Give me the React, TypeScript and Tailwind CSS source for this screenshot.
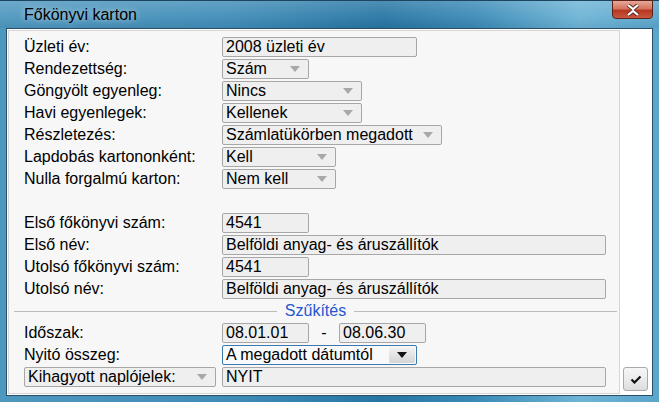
import type { ReactNode } from "react";

function Arrow({ dark = false }: { dark?: boolean }) {
  return (
    <svg width="10" height="6" viewBox="0 0 10 6" className="shrink-0">
      <path d="M0 0 L10 0 L5 6 Z" fill={dark ? "#111" : "#a8a8a8"} />
    </svg>
  );
}

function Field({ w, children }: { w: string; children: ReactNode }) {
  return (
    <div className={`${w} h-[20px] border border-[#a7a7a7] rounded-[2px] bg-[#efefef] pl-[3px] leading-[18px] whitespace-nowrap overflow-hidden`}>
      {children}
    </div>
  );
}

function Select({ w, children }: { w: string; children: ReactNode }) {
  return (
    <div className={`${w} h-[20px] border border-[#a7a7a7] rounded-[2px] bg-[#efefef] pl-[3px] pr-[8px] flex items-center justify-between leading-[18px] whitespace-nowrap`}>
      <span>{children}</span>
      <Arrow />
    </div>
  );
}

function Label({ children }: { children: ReactNode }) {
  return <div className="h-[20px] leading-[20px] whitespace-nowrap">{children}</div>;
}

export default function App() {
  return (
    <div
      className="w-[659px] h-[402px] flex flex-col text-[16px] text-black bg-[linear-gradient(90deg,#4e97bf_0%,#3f8cb7_35%,#2675a3_58%,#3a8ab6_72%,#6db4d6_88%,#5aa5cb_100%)]"
      style={{ fontFamily: '"Liberation Sans", Arial, sans-serif' }}
    >
      {/* Title bar */}
      <div className="h-[28px] shrink-0 flex items-start border-t border-[#1d4560] bg-[linear-gradient(180deg,rgba(255,255,255,0.18)_0%,rgba(255,255,255,0.05)_60%,rgba(0,0,0,0.05)_100%)]">
        <span className="pl-[24px] pt-[4px] leading-[20px] [text-shadow:0_0_6px_rgba(255,255,255,0.7)]">Főkönyvi karton</span>
        <div className="ml-auto mr-[6px] -mt-px w-[41px] h-[19px] rounded-b-[4px] border border-[#5a2218] bg-[linear-gradient(180deg,#e7a898_0%,#d47560_45%,#b8371f_55%,#c9573f_100%)] flex items-center justify-center">
          <svg width="14" height="12" viewBox="0 0 14 12">
            <path d="M2 1 L7 5 L12 1 M2 11 L7 7 L12 11" stroke="#5a2a22" strokeWidth="4" fill="none" />
            <path d="M2 1 L7 5 L12 1 M2 11 L7 7 L12 11" stroke="#ffffff" strokeWidth="2.2" fill="none" />
          </svg>
        </div>
      </div>

      {/* Client area */}
      <div className="flex-1 mx-[6px] mb-[6px] border border-[#2b4f68] bg-white p-px flex">
        {/* Form panel */}
        <div className="w-[612px] border border-[#d6d6d6] bg-[#f7f7f7] pt-[6px] pl-[15px] pr-[2px] flex flex-col gap-[2px]">
          <div className="grid grid-cols-[198px_1fr] gap-y-[2px]">
            <Label>Üzleti év:</Label>
            <Field w="w-[195px]">2008 üzleti év</Field>
            <Label>Rendezettség:</Label>
            <Select w="w-[87px]">Szám</Select>
            <Label>Göngyölt egyenleg:</Label>
            <Select w="w-[140px]">Nincs</Select>
            <Label>Havi egyenlegek:</Label>
            <Select w="w-[140px]">Kellenek</Select>
            <Label>Részletezés:</Label>
            <Select w="w-[220px]">Számlatükörben megadott</Select>
            <Label>Lapdobás kartononként:</Label>
            <Select w="w-[114px]">Kell</Select>
            <Label>Nulla forgalmú karton:</Label>
            <Select w="w-[114px]">Nem kell</Select>
            <div className="h-[20px]" />
            <div className="h-[20px]" />
            <Label>Első főkönyvi szám:</Label>
            <Field w="w-[87px]">4541</Field>
            <Label>Első név:</Label>
            <Field w="w-[384px]">Belföldi anyag- és áruszállítók</Field>
            <Label>Utolsó főkönyvi szám:</Label>
            <Field w="w-[87px]">4541</Field>
            <Label>Utolsó név:</Label>
            <Field w="w-[384px]">Belföldi anyag- és áruszállítók</Field>
          </div>

          {/* Szűkítés separator */}
          <div className="h-[20px] -ml-[10px] flex items-center gap-2">
            <div className="flex-1 h-px bg-[#bcbcbc]" />
            <span className="leading-[20px] text-[#2456d0]">Szűkítés</span>
            <div className="flex-1 h-px bg-[#bcbcbc]" />
          </div>

          <div className="grid grid-cols-[198px_1fr] gap-y-[2px]">
            <Label>Időszak:</Label>
            <div className="flex">
              <Field w="w-[87px]">08.01.01</Field>
              <span className="w-[30px] text-center leading-[20px]">-</span>
              <Field w="w-[87px]">08.06.30</Field>
            </div>
            <Label>Nyitó összeg:</Label>
            <div className="w-[195px] h-[20px] border border-[#3b78ad] rounded-[2px] bg-[#f8f9fa] pl-[3px] flex items-center leading-[18px]">
              <span className="flex-1 whitespace-nowrap">A megadott dátumtól</span>
              <div className="w-[26px] h-[16px] mr-px rounded-[2px] bg-[linear-gradient(180deg,#f2f2f2_0%,#e4e4e4_50%,#d4d4d4_100%)] flex items-center justify-center">
                <Arrow dark />
              </div>
            </div>
            <div className="w-[192px] h-[20px] border border-[#a7a7a7] rounded-[2px] bg-[#efefef] pl-[3px] pr-[8px] flex items-center justify-between leading-[18px]">
              <span className="whitespace-nowrap">Kihagyott naplójelek:</span>
              <Arrow />
            </div>
            <Field w="w-[384px]">NYIT</Field>
          </div>
        </div>

        {/* Right strip */}
        <div className="flex-1 flex flex-col justify-end items-start pl-[3px] pb-[3px]">
          <div className="w-[25px] h-[24px] rounded-[3px] border border-[#a9a9a9] bg-[linear-gradient(180deg,#f6f6f6_0%,#ececec_50%,#dcdcdc_100%)] flex items-center justify-center">
            <svg width="12" height="9" viewBox="0 0 12 9">
              <path d="M1.5 4.5 L4.5 7.5 L10.5 1.5" stroke="#111" strokeWidth="2.2" fill="none" />
            </svg>
          </div>
        </div>
      </div>
    </div>
  );
}
